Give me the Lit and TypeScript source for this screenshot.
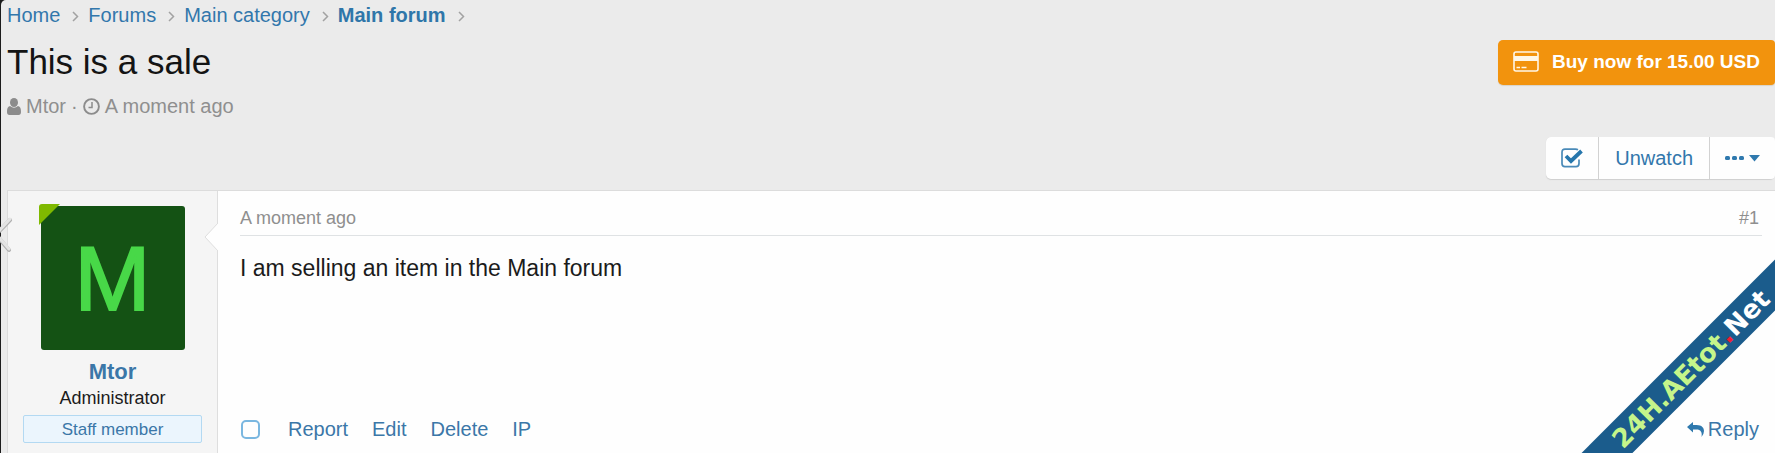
import { LitElement, html, css } from "lit";
import { customElement } from "lit/decorators.js";

const crumbs = [
  { label: "Home", current: false },
  { label: "Forums", current: false },
  { label: "Main category", current: false },
  { label: "Main forum", current: true },
];

@customElement("thread-header")
class ThreadHeader extends LitElement {
  static styles = css`
    :host { display: block; }
    a { color: #3277ac; text-decoration: none; }
    .crumbs { display: flex; margin: 0; padding: 0; list-style: none; font-size: 20px; line-height: 30px; }
    .crumbs li { display: flex; align-items: center; }
    .crumbs svg { margin: 2px 9px 0 12px; }
    .current { font-weight: bold; color: #2f76a9; }
    .titlebar { display: flex; justify-content: space-between; align-items: flex-start; padding-top: 9px; }
    h1 { margin: 0; font-size: 35px; line-height: 46px; font-weight: normal; color: #141414; }
    .meta { display: flex; align-items: center; gap: 5px; margin-top: 8px; font-size: 20px; line-height: 26px; color: #8f8f8f; }
    .buy {
      display: flex; align-items: center; gap: 13px; height: 45px; box-sizing: border-box; margin-top: 1px;
      padding: 0 15px 2px 15px; border: 0; border-radius: 5px 4px 4px 5px; background: #f2930d; color: #fff;
      font: bold 19px "Liberation Sans", Arial, sans-serif; box-shadow: 0 1px 1px #d9d3c8;
    }
    .tools { display: flex; justify-content: flex-end; padding: 18px 0 11px; }
    .group { display: flex; gap: 1px; height: 42px; background: #d2d2d2; border-radius: 5px; box-shadow: 0 1px 1px #cfcfcf; }
    .group button {
      display: flex; align-items: center; justify-content: center; gap: 6px; border: 0; background: #fefefe;
      color: #3277ac; padding: 0 16px; font: 20px "Liberation Sans", Arial, sans-serif;
    }
    .group button:first-child { border-radius: 5px 0 0 5px; padding: 0 15px; }
    .group button:last-child { border-radius: 0 4px 4px 0; padding: 0 15px; }
  `;

  render() {
    return html`
      <nav aria-label="Breadcrumb">
        <ul class="crumbs">
          ${crumbs.map(
            (c) => html`<li>
              <a href="#" class=${c.current ? "current" : ""}>${c.label}</a>
              <svg width="7" height="11" viewBox="0 0 7 11" aria-hidden="true"><path d="M1 1L5.5 5.5L1 10" fill="none" stroke="#a2a2a2" stroke-width="1.5" /></svg>
            </li>`
          )}
        </ul>
      </nav>
      <div class="titlebar">
        <div>
          <h1>This is a sale</h1>
          <div class="meta">
            <svg width="14" height="17" viewBox="0 0 14 17" aria-hidden="true">
              <ellipse cx="7" cy="4.5" rx="4" ry="4.5" fill="#8c8c8c" />
              <path d="M3 8Q7 11.500 11 8C13.500 8.500 14 11 14 14Q14 17 11.500 17H2.500Q0 17 0 14C0 11 .5 8.500 3 8Z" fill="#8c8c8c" />
            </svg>
            <span>Mtor</span><span>·</span>
            <svg width="17" height="17" viewBox="0 0 17 17" aria-hidden="true" fill="none" stroke="#8c8c8c">
              <circle cx="8.500" cy="8.500" r="7.400" stroke-width="1.900" />
              <path d="M9 4V9.500H5.500" stroke-width="1.500" />
            </svg>
            <span>A moment ago</span>
          </div>
        </div>
        <button class="buy">
          <svg width="26" height="21" viewBox="0 0 26 21" aria-hidden="true">
            <rect x="1" y="1" width="24" height="19" rx="2" fill="none" stroke="#fff7e6" stroke-width="1.600" />
            <path d="M1 5H25V10H1Z" fill="#fff7e6" />
            <path d="M3.500 16.500H7M8.500 16.500H13.500" stroke="#fff7e6" stroke-width="1.500" />
          </svg>
          Buy now for 15.00 USD
        </button>
      </div>
      <div class="tools">
        <div class="group">
          <button aria-label="Select thread">
            <svg width="22" height="20" viewBox="0 0 22 20" aria-hidden="true" fill="none">
              <path d="M17 1.800Q16 1.200 14.500 1.200H4Q1 1.200 1 4.200V15.500Q1 18.600 4 18.600H15Q18 18.600 18 15.500V11.500" stroke="#4a8ab8" stroke-width="1.700" />
              <path d="M5 8L10 13L20.500 3" stroke="#2676ac" stroke-width="3.800" />
            </svg>
          </button>
          <button>Unwatch</button>
          <button aria-label="More options">
            <svg width="35" height="8" viewBox="0 0 35 8" aria-hidden="true" fill="#2f79ae">
              <rect y="2" width="5" height="4" rx="1.500" /><rect x="7" y="2" width="5" height="4" rx="1.500" /><rect x="14" y="2" width="5" height="4" rx="1.500" />
              <path d="M24 1H35L29.500 7.500Z" />
            </svg>
          </button>
        </div>
      </div>
    `;
  }
}

@customElement("forum-post")
class ForumPost extends LitElement {
  static styles = css`
    :host { display: block; }
    a { color: #3b77a8; text-decoration: none; }
    .post { display: grid; grid-template-columns: 210px 1fr; border-top: 1px solid #dcdcdc; border-left: 1px solid #dcdcdc; background: #fefefe; }
    .user {
      position: relative; display: flex; flex-direction: column; align-items: center; padding: 15px 15px 10px;
      box-sizing: border-box; background: #f5f5f5; border-right: 1px solid #dedede; color: #1b1b1b;
    }
    .avatar {
      position: relative; width: 144px; height: 144px; border-radius: 3px; background: #145214; color: #48d848;
      font-size: 91px; line-height: 145px; text-align: center; -webkit-text-stroke: 2px #48d848;
    }
    .online { position: absolute; left: -2px; top: -2px; }
    .notch { position: absolute; right: -1px; top: 32px; }
    .name { margin-top: 8px; font-size: 22px; line-height: 28px; font-weight: bold; }
    .role { font-size: 18px; line-height: 24px; margin-bottom: 5px; }
    .staff {
      align-self: stretch; box-sizing: border-box; height: 28px; border: 1px solid #b3d9f2; border-radius: 2px;
      background: #ebf5fd; color: #3b77a8; font-size: 17px; line-height: 27px; text-align: center;
    }
    .body { display: flex; flex-direction: column; padding: 15px 13px 10px 22px; }
    header { display: flex; justify-content: space-between; border-bottom: 1px solid #dfe2e4; padding: 0 3px 5px 0; font-size: 18px; line-height: 24px; color: #8f8f8f; }
    header a { color: #8f8f8f; }
    .text { flex: 1; margin: 17px 0 0; font-size: 23px; line-height: 30px; color: #1b1b1b; }
    footer { display: flex; align-items: center; gap: 24px; padding-right: 3px; font-size: 20px; line-height: 28px; }
    input { appearance: none; box-sizing: border-box; width: 19px; height: 19px; margin: 0 4px 0 1px; border: 2px solid #7ab7e0; border-radius: 5px; background: #fefefe; }
    .reply { display: flex; align-items: center; gap: 4px; margin-left: auto; }
  `;

  render() {
    return html`
      <article class="post">
        <div class="user">
          <div class="avatar">
            M
            <svg class="online" width="21" height="21" viewBox="0 0 21 21" aria-hidden="true"><path d="M0 3Q0 0 3 0H21L0 21Z" fill="#7fb900" /></svg>
          </div>
          <a class="name" href="#">Mtor</a>
          <div class="role">Administrator</div>
          <div class="staff">Staff member</div>
          <svg class="notch" width="14" height="28" viewBox="0 0 14 28" aria-hidden="true">
            <path d="M14 0L1 14L14 28Z" fill="#fefefe" /><path d="M14 0L1 14L14 28" fill="none" stroke="#dedede" />
          </svg>
        </div>
        <div class="body">
          <header><span>A moment ago</span><a href="#">#1</a></header>
          <p class="text">I am selling an item in the Main forum</p>
          <footer>
            <input type="checkbox" aria-label="Select post" />
            <a href="#">Report</a><a href="#">Edit</a><a href="#">Delete</a><a href="#">IP</a>
            <a class="reply" href="#">
              <svg width="17" height="15" viewBox="0 0 17 15" aria-hidden="true"><path d="M0 5L6 0V3H9.500C15 3 17 6 17 9Q17 12 14.500 15C15.500 10 13.500 7.500 9.500 7.500H6V10.500Z" fill="#2f79ae" /></svg>
              Reply
            </a>
          </footer>
        </div>
      </article>
    `;
  }
}

@customElement("app-root")
class AppRoot extends LitElement {
  static styles = css`
    :host { display: block; position: relative; overflow: hidden; background: #1c1c1c; font-family: "Liberation Sans", Arial, sans-serif; }
    .page { margin-left: 1px; padding-left: 6px; background: #ebebeb; border-top-left-radius: 5px; }
    .prev { position: absolute; left: 0; top: 217px; }
    .ribbon {
      position: absolute; right: -66px; bottom: 66px; width: 300px; height: 36px; transform: rotate(-45deg);
      background: #1b5c8c; color: #c5f58a; text-align: center; white-space: nowrap;
      font: bold 26px/37px "DejaVu Sans", sans-serif;
    }
    .dot { color: #f01c34; }
    .net { color: #fff; }
  `;

  render() {
    return html`
      <main class="page">
        <thread-header></thread-header>
        <forum-post></forum-post>
      </main>
      <svg class="prev" width="13" height="36" viewBox="0 0 13 36" aria-hidden="true" fill="none" stroke-linecap="round">
        <path d="M10 3L-4 17.500L9 33" stroke="#b0b0b0" stroke-width="4" /><path d="M10 2L-4 17L9 32" stroke="#e4e4e4" stroke-width="3" />
      </svg>
      <div class="ribbon">24H.AEtot<span class="dot">.</span><span class="net">Net</span></div>
    `;
  }
}
